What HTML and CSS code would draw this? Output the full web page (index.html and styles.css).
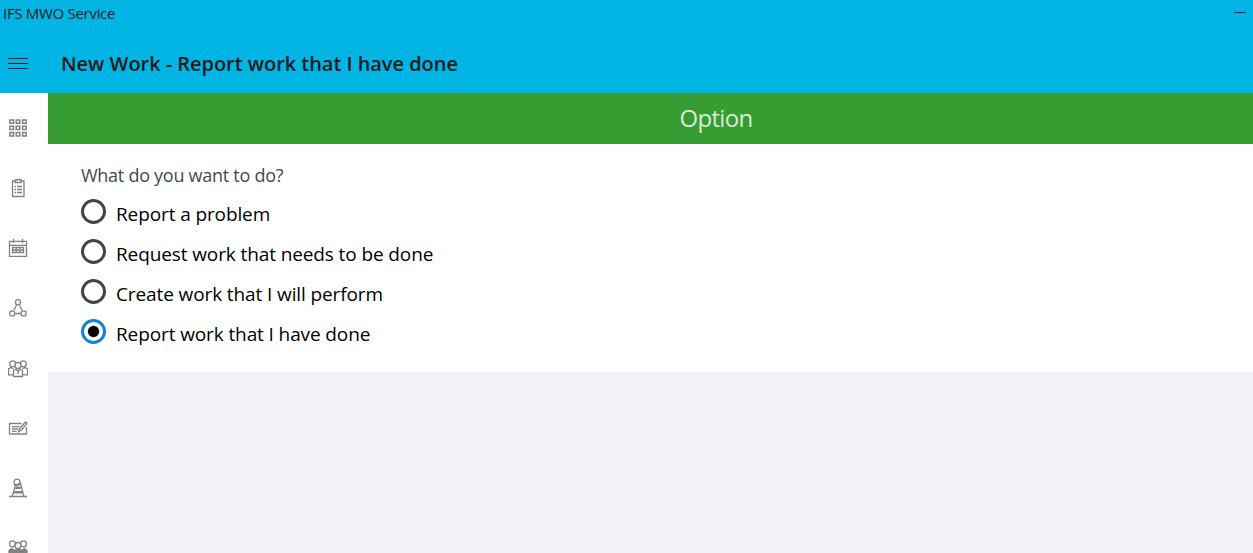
FILE: index.html
```
<!DOCTYPE html>
<html lang="en">
<head>
    <meta charset="UTF-8">
    <title>IFS MWO Service</title>
    <link rel="stylesheet" href="styles.css">
</head>
<body>
<div class="app">
    <div class="titlebar">
        <span>IFS MWO Service</span>
        <div class="minimize"></div>
    </div>
    <div class="header">
        <div class="menu">
            <i></i><i></i><i></i>
        </div>
        <h1>New Work - Report work that I have done</h1>
    </div>
    <div class="main">
        <div class="sidebar">
            <a class="item">
                <svg viewBox="0 0 20 20"><path class="tiles" d="M1.900 2h3.600v3.300H1.900zM8.200 2h3.600v3.300H8.200zM14.600 2h3.600v3.300h-3.600zM1.900 8.300h3.600v3.300H1.900zM8.200 8.300h3.600v3.300H8.200zM14.600 8.300h3.600v3.300h-3.600zM1.900 14.600h3.600v3.300H1.900zM8.200 14.600h3.600v3.300H8.200zM14.600 14.600h3.600v3.300h-3.600z"/></svg>
            </a>
            <a class="item">
                <svg viewBox="0 0 20 20"><path d="M7 3H4.500v15.500h11.500V3H13.500M7.200 4.500V2h1.800V1.300h2.500V2h1.800v2.500zM6.500 8.500h1.500M9 8.500h5M6.500 11.500h1.500M9 11.500h5M6.500 14.500h1.500M9 14.500h5"/></svg>
            </a>
            <a class="item">
                <svg viewBox="0 0 20 20"><path d="M1.500 3.300h17v15h-17zM1.500 7.300h17M5.500 1v4M14.500 1v4M4.500 9.500h11v5h-11zM4.500 12h11M8.200 9.500v5M11.800 9.500v5"/></svg>
            </a>
            <a class="item">
                <svg viewBox="0 0 20 20"><circle cx="10" cy="4.300" r="2.600"/><circle cx="4.200" cy="15.500" r="2.600"/><circle cx="15.600" cy="15.500" r="2.600"/><path d="M8.400 7.300L6 12M11.600 7.300L14 12M7.300 15.500h5.200"/></svg>
            </a>
            <a class="item">
                <svg viewBox="0 0 20 20"><path d="M5.500 16.800h-5v-6l2.500-1.300 2.500 1.500M14.500 16.800h5v-6L17 9.500 14.500 11M5.500 18.500v-6l2.500-1.500 2 2.500 2-2.500 2.500 1.500v6zM10 13.500v2.500"/><circle cx="4.700" cy="5.800" r="3"/><circle cx="15.300" cy="5.800" r="3"/><circle class="cover" cx="10" cy="7.500" r="3"/></svg>
            </a>
            <a class="item">
                <svg viewBox="0 0 20 20"><path d="M13.500 5.500h-12v10.500h17V9M4 8.700h7.500M4 11h6M4 13.300h4.500M10.500 13.700l1-3L17.500 4l1.500 1.300-6 7.200z"/></svg>
            </a>
            <a class="item">
                <svg viewBox="0 0 20 20"><circle cx="9" cy="4.200" r="3"/><path d="M1 18.500h18M4.300 18L7 9M15.700 18L12.500 5M6 7.800l6.800-3"/><path class="band" d="M7.200 9.700h5.600M5.700 14.300h8.600"/></svg>
            </a>
            <a class="item">
                <svg viewBox="0 0 20 20"><path class="solid" d="M1 17v-4.500L3.500 10.500 6 12v5zM14 17v-5l2.500-1.500 2.500 2V17zM5 18v-4.500l3-2h4l3 2V18z"/><circle class="cover" cx="4.500" cy="5.800" r="3"/><circle class="cover" cx="15.500" cy="5.800" r="3"/><circle class="cover" cx="10" cy="7.500" r="3"/></svg>
            </a>
        </div>
        <div class="content">
            <div class="step">Option</div>
            <form class="panel">
                <p class="question">What do you want to do?</p>
                <label class="option"><input type="radio" name="work"><span>Report a problem</span></label>
                <label class="option"><input type="radio" name="work"><span>Request work that needs to be done</span></label>
                <label class="option"><input type="radio" name="work"><span>Create work that I will perform</span></label>
                <label class="option"><input type="radio" name="work" checked><span>Report work that I have done</span></label>
            </form>
        </div>
    </div>
</div>
</body>
</html>
```
FILE: styles.css
```
body,html{
    margin: 0;
    padding: 0;
    width: 100%;
    height: 100%;
    overflow: hidden;
}
*{
    box-sizing: border-box;
}
body{
    font-family: "Open Sans", "Noto Sans", sans-serif;
    color: #000;
}
.app{
    height: 100%;
    display: flex;
    flex-direction: column;
}
.titlebar{
    height: 34px;
    padding: 3px 7px 0 3px;
    display: flex;
    justify-content: space-between;
    flex-shrink: 0;
    background-color: #00b5e3;
    font-size: 15px;
    letter-spacing: -0.3px;
    line-height: 21px;
    color: #1b1b1b;
}
.minimize{
    width: 12px;
    height: 1px;
    margin-top: 9px;
    background-color: #1b1b1b;
}
.header{
    height: 59px;
    display: flex;
    align-items: center;
    flex-shrink: 0;
    background-color: #00b5e3;
    color: #1b1b1b;
}
.menu{
    width: 20px;
    height: 11px;
    margin: 0 33px 0 8px;
    display: flex;
    flex-direction: column;
    justify-content: space-between;
}
.menu i{
    height: 1px;
    background-color: #1b1b1b;
}
.header h1{
    margin: 0;
    font-size: 20px;
    font-weight: 600;
    letter-spacing: -0.04px;
    line-height: 28px;
}
.main{
    flex: 1;
    min-height: 0;
    display: flex;
}
.sidebar{
    width: 48px;
    padding-top: 5px;
    flex-shrink: 0;
    overflow: hidden;
    background-color: #fff;
}
.item{
    height: 60px;
    padding-left: 8px;
    display: flex;
    align-items: center;
}
.item svg{
    width: 20px;
    height: 20px;
    fill: none;
    stroke: #828282;
    stroke-width: 1.3;
}
.item .cover{
    fill: #fff;
}
.item .solid{
    fill: #828282;
}
.item .tiles{
    stroke-width: 1.5;
}
.item .band{
    stroke-width: 2.4;
}
.content{
    flex: 1;
    background-color: #f3f1f5;
}
.step{
    height: 51px;
    padding-left: 131px;
    background-color: #379c32;
    color: #d7ebd6;
    font-size: 24px;
    letter-spacing: -0.7px;
    line-height: 50px;
    text-align: center;
}
.panel{
    height: 228px;
    padding: 18px 33px 0;
    background-color: #fff;
}
.question{
    margin: 0;
    height: 30px;
    font-size: 18px;
    letter-spacing: -0.27px;
    line-height: 26px;
    color: #414b50;
}
.option{
    height: 40px;
    display: flex;
    align-items: center;
    font-size: 19px;
    letter-spacing: -0.11px;
}
.option input{
    appearance: none;
    width: 25px;
    height: 25px;
    margin: 0 10px 1px 0;
    border: 3px solid #444;
    border-radius: 50%;
}
.option input:checked{
    border-color: #0f83dc;
    background: radial-gradient(circle, #000 5px, transparent 6.200px);
}
.option span{
    padding-top: 4px;
}
```
